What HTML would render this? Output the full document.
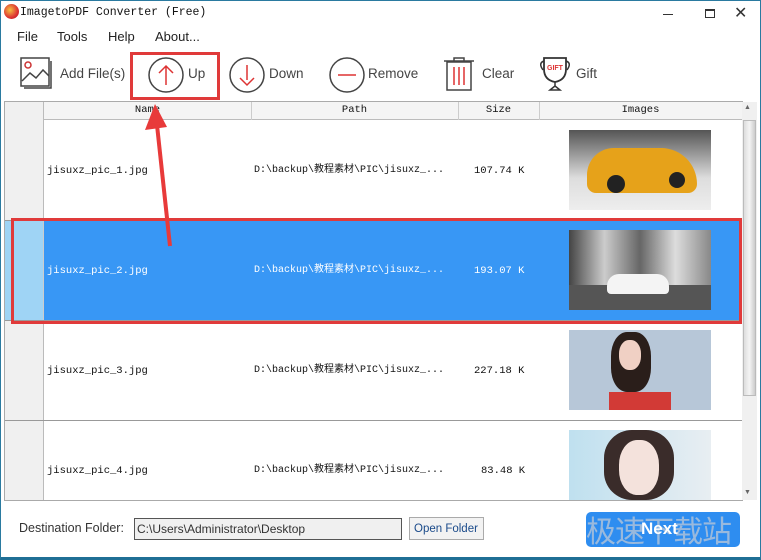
<!DOCTYPE html>
<html><head><meta charset="utf-8"><style>
*{margin:0;padding:0;box-sizing:border-box}
body{width:761px;height:560px;overflow:hidden;background:#fff;position:relative;font-family:"Liberation Sans","Noto Sans CJK SC",sans-serif;}
.a{position:absolute;white-space:nowrap}
.mono{font-family:"Liberation Mono","Noto Sans CJK SC",monospace;font-size:10.5px;line-height:12px;color:#111}
.menu{font-size:13px;color:#222}
.tb{font-size:13.5px;color:#444}
.hd{font-family:"Liberation Mono",monospace;font-size:10.5px;color:#111;text-align:center;top:104px}
</style></head><body>
<div class="a" style="left:0;top:0;width:761px;height:560px;border:1px solid #2a7aa0;border-bottom:3px solid #1f6f95"></div>
<div class="a" style="left:4px;top:4px;width:15px;height:15px;border-radius:50%;background:radial-gradient(circle at 40% 40%,#f5c040,#d33 60%,#a11)"></div>
<div class="a mono" style="left:20px;top:7px;font-size:11.5px">ImagetoPDF Converter (Free)</div>
<div class="a" style="left:663px;top:14px;width:10px;height:1px;background:#333"></div>
<div class="a" style="left:705px;top:9px;width:10px;height:9px;border:1px solid #333;border-top-width:2px"></div>
<div class="a" style="left:734px;top:3px;font-size:16px;color:#333">✕</div>
<div class="a menu" style="left:17px;top:29px">File</div>
<div class="a menu" style="left:57px;top:29px">Tools</div>
<div class="a menu" style="left:108px;top:29px">Help</div>
<div class="a menu" style="left:155px;top:29px">About...</div>
<svg class="a" style="left:20px;top:57px" width="34" height="34"><rect x="1" y="1" width="28" height="28" fill="none" stroke="#444" stroke-width="1.5"/><path d="M4 31H31V4" fill="none" stroke="#444" stroke-width="1.5"/><circle cx="8" cy="8" r="3" fill="none" stroke="#c33" stroke-width="1.5"/><path d="M2 24L10 16L16 21L23 13L29 19" fill="none" stroke="#444" stroke-width="1.5"/></svg>
<div class="a tb" style="left:60px;top:66px">Add File(s)</div>
<div class="a" style="left:130px;top:52px;width:90px;height:48px;border:3px solid #e03a3a"></div>
<svg class="a" style="left:147px;top:56px" width="38" height="38"><circle cx="19" cy="19" r="17" fill="none" stroke="#444" stroke-width="1.5"/><path d="M19 29V10M12 17L19 10L26 17" fill="none" stroke="#d33" stroke-width="1.5"/></svg>
<div class="a tb" style="left:188px;top:66px">Up</div>
<svg class="a" style="left:228px;top:56px" width="38" height="38"><circle cx="19" cy="19" r="17" fill="none" stroke="#444" stroke-width="1.5"/><path d="M19 9V24M12 22L19 29L26 22" fill="none" stroke="#d33" stroke-width="1.5"/></svg>
<div class="a tb" style="left:269px;top:66px">Down</div>
<svg class="a" style="left:328px;top:56px" width="38" height="38"><circle cx="19" cy="19" r="17" fill="none" stroke="#444" stroke-width="1.5"/><path d="M10 19H28" stroke="#d33" stroke-width="1.5"/></svg>
<div class="a tb" style="left:368px;top:66px">Remove</div>
<svg class="a" style="left:441px;top:56px" width="36" height="36"><path d="M3 5H33M13 5V2H23V5" fill="none" stroke="#444" stroke-width="1.5"/><rect x="6" y="6" width="24" height="28" fill="none" stroke="#444" stroke-width="1.5"/><path d="M13 11V29M18 11V29M23 11V29" stroke="#d33" stroke-width="1.5"/></svg>
<div class="a tb" style="left:482px;top:66px">Clear</div>
<svg class="a" style="left:537px;top:55px" width="36" height="38"><path d="M7 3H29V14Q29 25 18 27Q7 25 7 14Z" fill="none" stroke="#333" stroke-width="1.8"/><path d="M7 6Q1 8 6 15M29 6Q35 8 30 15" fill="none" stroke="#333" stroke-width="1.5"/><path d="M18 27V32M13 35H23L18 31Z" fill="none" stroke="#333" stroke-width="1.5"/><text x="18" y="15" font-size="7" font-weight="bold" fill="#d33" text-anchor="middle" font-family="Liberation Sans">GIFT</text></svg>
<div class="a tb" style="left:576px;top:66px">Gift</div>
<!-- grid -->
<div class="a" style="left:4px;top:101px;width:739px;height:400px;border:1px solid #aaa;background:#fff"></div>
<div class="a" style="left:5px;top:102px;width:737px;height:18px;background:#f4f4f4;border-bottom:1px solid #bbb"></div>
<div class="a" style="left:5px;top:102px;width:39px;height:398px;background:#f0f0f0;border-right:1px solid #bbb"></div>
<div class="a" style="left:251px;top:102px;width:1px;height:18px;background:#ccc"></div>
<div class="a" style="left:458px;top:102px;width:1px;height:18px;background:#ccc"></div>
<div class="a" style="left:539px;top:102px;width:1px;height:18px;background:#ccc"></div>
<div class="a hd" style="left:44px;width:207px">Name</div>
<div class="a hd" style="left:251px;width:207px">Path</div>
<div class="a hd" style="left:458px;width:81px">Size</div>
<div class="a hd" style="left:539px;width:203px">Images</div>
<div class="a" style="left:5px;top:220px;width:737px;height:1px;background:#999"></div>
<div class="a" style="left:44px;top:221px;width:698px;height:100px;background:#3897f5"></div>
<div class="a" style="left:5px;top:221px;width:39px;height:100px;background:#9fd4f5;border-right:1px solid #ccc"></div>
<div class="a" style="left:5px;top:320px;width:737px;height:1px;background:#999"></div>
<div class="a" style="left:5px;top:420px;width:737px;height:1px;background:#999"></div>
<div class="a mono" style="left:47px;top:165px">jisuxz_pic_1.jpg</div>
<div class="a mono" style="left:47px;top:265px;color:#fff">jisuxz_pic_2.jpg</div>
<div class="a mono" style="left:47px;top:365px">jisuxz_pic_3.jpg</div>
<div class="a mono" style="left:47px;top:465px">jisuxz_pic_4.jpg</div>
<div class="a mono" style="left:254px;top:165px;font-size:10px">D:\backup\教程素材\PIC\jisuxz_...</div>
<div class="a mono" style="left:254px;top:265px;font-size:10px;color:#fff">D:\backup\教程素材\PIC\jisuxz_...</div>
<div class="a mono" style="left:254px;top:365px;font-size:10px">D:\backup\教程素材\PIC\jisuxz_...</div>
<div class="a mono" style="left:254px;top:465px;font-size:10px">D:\backup\教程素材\PIC\jisuxz_...</div>
<div class="a mono" style="left:474px;top:165px">107.74 K</div>
<div class="a mono" style="left:474px;top:265px;color:#fff">193.07 K</div>
<div class="a mono" style="left:474px;top:365px">227.18 K</div>
<div class="a mono" style="left:481px;top:465px">83.48 K</div>
<div class="a" style="left:569px;top:130px;width:142px;height:80px;background:linear-gradient(180deg,#555,#ddd 60%,#eee)"><div class="a" style="left:18px;top:18px;width:110px;height:45px;border-radius:30px 40px 10px 10px;background:#e6a21a"></div><div class="a" style="left:38px;top:45px;width:18px;height:18px;border-radius:50%;background:#222"></div><div class="a" style="left:100px;top:42px;width:16px;height:16px;border-radius:50%;background:#222"></div></div>
<div class="a" style="left:569px;top:230px;width:142px;height:80px;background:linear-gradient(90deg,#444,#ccc,#666,#ddd,#888);"><div class="a" style="left:0;top:55px;width:142px;height:25px;background:#555"></div><div class="a" style="left:38px;top:44px;width:62px;height:20px;border-radius:12px 12px 4px 4px;background:#f4f4f4"></div></div>
<div class="a" style="left:569px;top:330px;width:142px;height:80px;background:#b7c7d8"><div class="a" style="left:42px;top:2px;width:40px;height:60px;border-radius:40%;background:#2a1e1a"></div><div class="a" style="left:50px;top:10px;width:22px;height:30px;border-radius:45%;background:#f0d0c4"></div><div class="a" style="left:40px;top:62px;width:62px;height:18px;background:#d23a36"></div></div>
<div class="a" style="left:569px;top:430px;width:142px;height:70px;background:linear-gradient(90deg,#bfe0ef,#e8eef2)"><div class="a" style="left:35px;top:0;width:70px;height:70px;border-radius:40%;background:#3a2c2a"></div><div class="a" style="left:50px;top:10px;width:40px;height:55px;border-radius:45%;background:#f4e2dc"></div></div>
<!-- scrollbar -->
<div class="a" style="left:742px;top:102px;width:15px;height:398px;background:#f0f0f0"></div>
<div class="a" style="left:744px;top:104px;font-size:7px;color:#666">▲</div>
<div class="a" style="left:743px;top:120px;width:13px;height:276px;background:linear-gradient(90deg,#ddd,#f4f4f4,#ccc);border:1px solid #bbb"></div>
<div class="a" style="left:744px;top:489px;font-size:7px;color:#666">▼</div>
<!-- annotations -->
<div class="a" style="left:11px;top:218px;width:731px;height:106px;border:3px solid #e03a3a"></div>
<svg class="a" style="left:140px;top:100px" width="50" height="150"><path d="M30 146L17 25" stroke="#e83a3a" stroke-width="4"/><path d="M15 4L5 30L27 27Z" fill="#e83a3a"/></svg>
<!-- bottom -->
<div class="a" style="left:19px;top:521px;font-size:12.5px;color:#333">Destination Folder:</div>
<div class="a" style="left:134px;top:518px;width:268px;height:22px;border:1px solid #555;background:#f0f0f0;font-size:12px;line-height:14px;color:#333;padding:3px 2px">C:\Users\Administrator\Desktop</div>
<div class="a" style="left:409px;top:517px;width:75px;height:23px;border:1px solid #aaa;background:#f2f2f2;font-size:11.5px;line-height:14px;color:#1a4a8a;padding:4px 4px">Open Folder</div>
<div class="a" style="left:586px;top:512px;width:154px;height:35px;border-radius:5px;background:#2e8df0"></div>
<div class="a" style="left:586px;top:510px;font-size:30px;line-height:38px;color:rgba(190,200,215,.75);letter-spacing:-1px;font-family:'Noto Sans CJK SC',sans-serif">极速下载站</div>
<div class="a" style="left:641px;top:519px;font-size:17px;line-height:20px;font-weight:bold;color:#fff">Next</div>
</body></html>
